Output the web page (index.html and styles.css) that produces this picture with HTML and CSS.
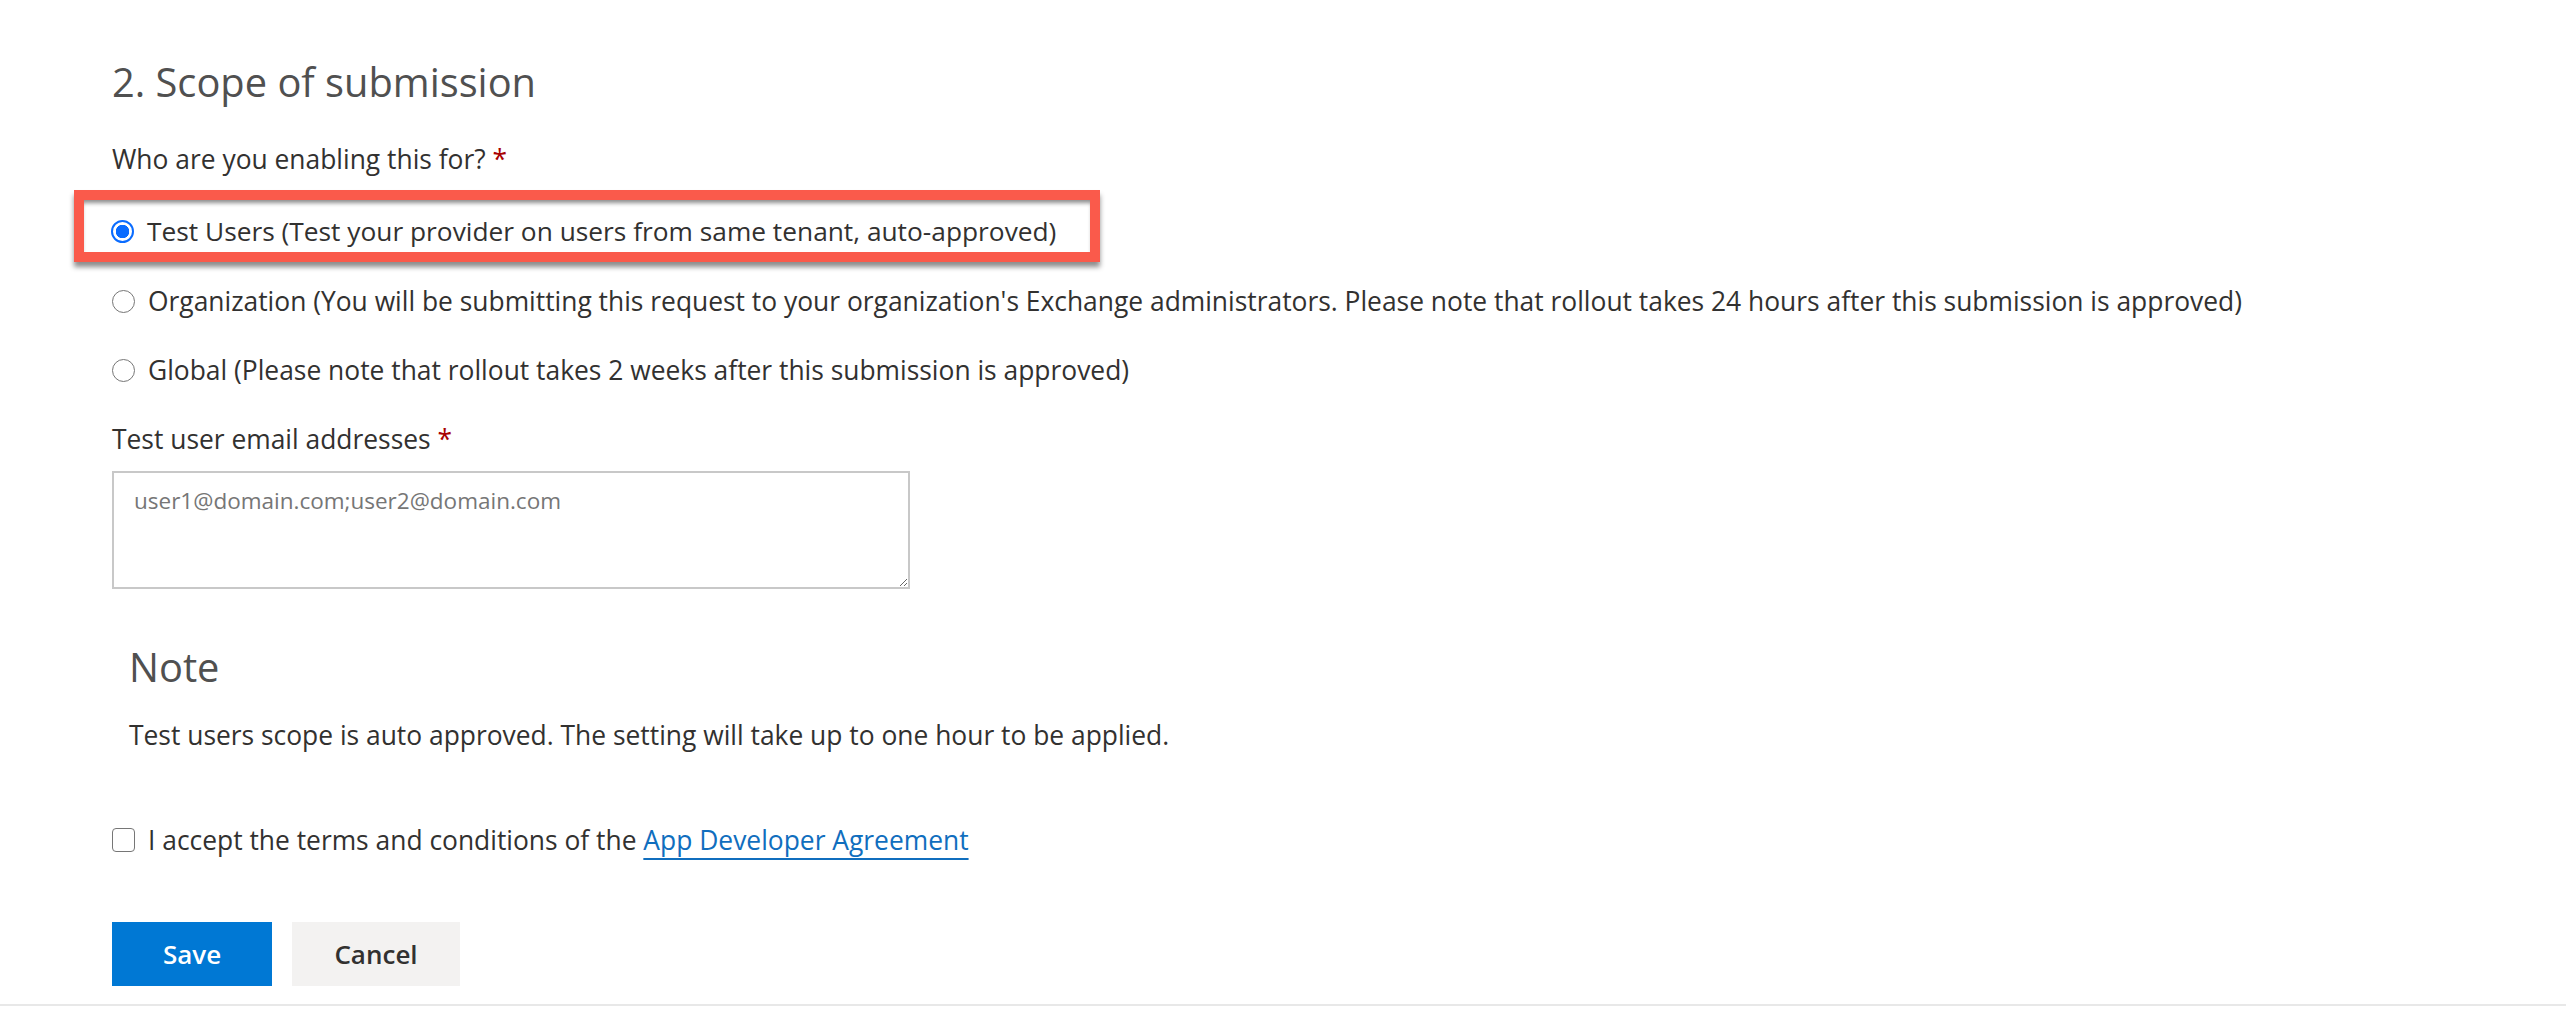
FILE: index.html
```html
<!DOCTYPE html>
<html lang="en">
<head>
<meta charset="utf-8">
<title>Scope of submission</title>
<link rel="stylesheet" href="styles.css">
</head>
<body>
<main class="form">
  <h2 class="title">2. Scope of submission</h2>
  <div class="field-label">Who are you enabling this for? <span class="req">*</span></div>

  <div class="highlight">
    <label class="option">
      <input type="radio" name="scope" class="radio" checked>
      <span>Test Users (Test your provider on users from same tenant, auto-approved)</span>
    </label>
  </div>
  <label class="option opt-org">
    <input type="radio" name="scope" class="radio">
    <span>Organization (You will be submitting this request to your organization's Exchange administrators. Please note that rollout takes 24 hours after this submission is approved)</span>
  </label>
  <label class="option opt-global">
    <input type="radio" name="scope" class="radio">
    <span>Global (Please note that rollout takes 2 weeks after this submission is approved)</span>
  </label>

  <div class="field-label email-label">Test user email addresses <span class="req">*</span></div>
  <textarea class="emails" placeholder="user1@domain.com;user2@domain.com"></textarea>

  <section class="note">
    <h3 class="note-title">Note</h3>
    <p class="note-text">Test users scope is auto approved. The setting will take up to one hour to be applied.</p>
  </section>

  <label class="accept">
    <input type="checkbox" class="check">
    <span>I accept the terms and conditions of the <a href="#" class="link">App Developer Agreement</a></span>
  </label>

  <div class="actions">
    <button class="btn btn-primary" type="button">Save</button>
    <button class="btn btn-default" type="button">Cancel</button>
  </div>
</main>
<div class="divider"></div>
</body>
</html>
```

FILE: styles.css
```css
* { box-sizing: border-box; }
html, body { margin: 0; padding: 0; background: #fff; }
body {
  font-family: "Open Sans", "Noto Sans", sans-serif;
  color: #323130;
  font-size: 26.4px;
  line-height: 34px;
}
.form { padding: 58px 0 0 112px; }
.title {
  margin: 0;
  font-size: 39.8px;
  line-height: 48px;
  font-weight: 400;
  color: #505050;
}
.field-label { margin-top: 36px; }
.req { color: #a80000; }
.highlight {
  display: flex;
  width: 1026px;
  height: 72px;
  margin: 14px 0 0 -38px;
  border: 10px solid #fa5a4b;
  padding: 10px 0 0 27px;
  box-shadow: 0 5px 5px rgba(0,0,0,0.45), inset 0 5px 4px -2px rgba(0,0,0,0.45);
}
.option {
  display: flex;
  align-items: center;
  height: 34px;
  white-space: nowrap;
}
.highlight .option { height: 42px; font-size: 26.3px; }
.opt-org { margin-top: 22px; }
.opt-global { margin-top: 35px; }
.radio {
  appearance: none;
  -webkit-appearance: none;
  width: 23px;
  height: 23px;
  margin: 0 13px 0 0;
  border: 1.5px solid #767676;
  border-radius: 50%;
  background: #fff;
  flex: none;
}
.radio:checked {
  border: 2px solid #0a6cff;
  background: radial-gradient(circle, #0a6cff 0 6.5px, #fff 7px);
}
.email-label { margin-top: 35px; }
.emails {
  display: block;
  width: 798px;
  height: 118px;
  margin-top: 15px;
  border: 2px solid #c8c8c8;
  padding: 13px 20px;
  font-family: "Open Sans", "Noto Sans", sans-serif;
  font-size: 22.5px;
  line-height: 30px;
  resize: vertical;
}
.emails::placeholder { color: #767676; }
.note { padding-left: 17px; }
.note-title {
  margin: 54px 0 0;
  font-size: 39.8px;
  line-height: 48px;
  font-weight: 400;
  color: #505050;
}
.note-text { margin: 27px 0 0; }
.accept {
  display: flex;
  align-items: center;
  height: 34px;
  margin-top: 71px;
}
.check {
  appearance: none;
  -webkit-appearance: none;
  width: 23px;
  height: 24px;
  margin: 0 13px 0 0;
  border: 1.5px solid #767676;
  border-radius: 4px;
  background: #fff;
  flex: none;
}
.link {
  color: #106ebe;
  text-decoration: underline;
  text-decoration-thickness: 2px;
  text-underline-offset: 8px;
}
.actions { display: flex; gap: 20px; margin-top: 65px; }
.btn {
  height: 64px;
  border: none;
  font-family: "Open Sans", "Noto Sans", sans-serif;
  font-size: 26px;
  font-weight: 600;
  padding: 0;
}
.btn-primary { width: 160px; background: #0078d4; color: #fff; }
.btn-default { width: 168px; background: #f3f2f1; color: #323130; }
.divider { height: 2px; background: #e8e8e8; margin-top: 18px; }
```
